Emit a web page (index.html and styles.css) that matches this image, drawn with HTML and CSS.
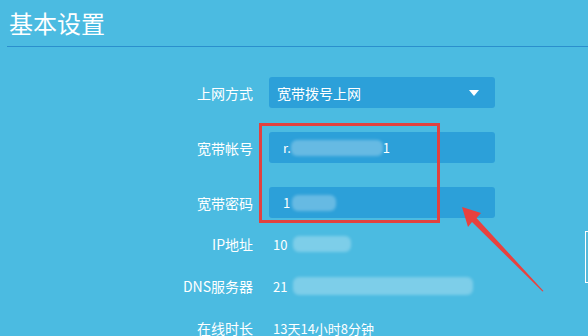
FILE: index.html
```html
<!DOCTYPE html>
<html lang="zh-CN">
<head>
    <meta charset="UTF-8">
    <title>基本设置</title>
    <link rel="stylesheet" href="styles.css">
</head>
<body>
    <div class="page">
        <div class="header">
            <h1>基本设置</h1>
        </div>

        <div class="form">
            <div class="row">
                <label class="label">上网方式</label>
                <div class="field select">
                    <span>宽带拨号上网</span>
                    <span class="caret"></span>
                </div>
            </div>

            <div class="row">
                <label class="label">宽带帐号</label>
                <div class="field">
                    <span class="val">r.</span><span class="blur blur-user"></span><span class="val">1</span>
                </div>
            </div>

            <div class="row">
                <label class="label">宽带密码</label>
                <div class="field">
                    <span class="val">1</span><span class="blur blur-pass"></span>
                </div>
            </div>

            <div class="info-row">
                <span class="label">IP地址</span>
                <span class="info">10<span class="blur blur-ip"></span></span>
            </div>

            <div class="info-row">
                <span class="label">DNS服务器</span>
                <span class="info">21<span class="blur blur-dns"></span></span>
            </div>

            <div class="info-row">
                <span class="label">在线时长</span>
                <span class="info">13天14小时8分钟</span>
            </div>
        </div>

        <!-- annotation drawn over the screenshot -->
        <div class="mark-box"></div>
        <svg class="mark-arrow" viewBox="455 200 95 95" width="95" height="95">
            <polygon points="462,207 481,213 476.5,218 543.5,291 542.5,291.5 472,222 468,227" fill="#e8413f"/>
        </svg>
        <div class="edge-tab"></div>
    </div>
</body>
</html>
```

FILE: styles.css
```css
body {
    margin: 0;
    background-color: #4bbbe1;
    font-family: "Noto Sans CJK SC", "Noto Sans", sans-serif;
    color: #ffffff;
    overflow: hidden;
}

.page {
    position: relative;
    width: 588px;
    height: 336px;
}

.header {
    margin-left: 7px;
    height: 46px;
    border-bottom: 1px solid #2b8fcd;
}

.header h1 {
    margin: 0;
    padding: 6px 0 0 2px;
    font-size: 24px;
    font-weight: normal;
    line-height: 34px;
}

.form {
    padding-top: 30px;
}

.row {
    display: flex;
    align-items: center;
    height: 31px;
    margin-bottom: 24px;
}

.row:nth-child(3) {
    margin-bottom: 16px;
}

.label {
    width: 269px;
    padding-right: 16px;
    box-sizing: border-box;
    text-align: right;
    font-size: 14px;
}

.field {
    display: flex;
    align-items: center;
    width: 226px;
    height: 31px;
    padding: 0 14px;
    box-sizing: border-box;
    background-color: #2ca0d9;
    border-radius: 3px;
    font-size: 14px;
}

.select {
    justify-content: space-between;
    padding-left: 8px;
}

.caret {
    width: 0;
    height: 0;
    border-left: 5px solid transparent;
    border-right: 5px solid transparent;
    border-top: 6px solid #ffffff;
    margin-right: 2px;
}

.val {
    font-size: 13px;
}

.blur {
    display: inline-block;
    height: 16px;
    background-color: rgba(255, 255, 255, 0.28);
    filter: blur(1.5px);
    border-radius: 6px;
}

.blur-user { width: 92px; }
.blur-pass { width: 44px; margin-left: 2px; }
.blur-ip { width: 58px; margin-left: 6px; }
.blur-dns { width: 180px; margin-left: 6px; height: 18px; }

.info-row {
    display: flex;
    align-items: center;
    height: 20px;
    margin-bottom: 22px;
}

.info {
    display: flex;
    align-items: center;
    padding-left: 4px;
    font-size: 13px;
}

.mark-box {
    position: absolute;
    left: 259px;
    top: 123px;
    width: 175px;
    height: 94px;
    border: 3px solid #e2413f;
}

.mark-arrow {
    position: absolute;
    left: 455px;
    top: 200px;
}

.edge-tab {
    position: absolute;
    left: 585px;
    top: 231px;
    width: 10px;
    height: 50px;
    border: 1px solid #ffffff;
    background-color: #56b8d8;
}
```
